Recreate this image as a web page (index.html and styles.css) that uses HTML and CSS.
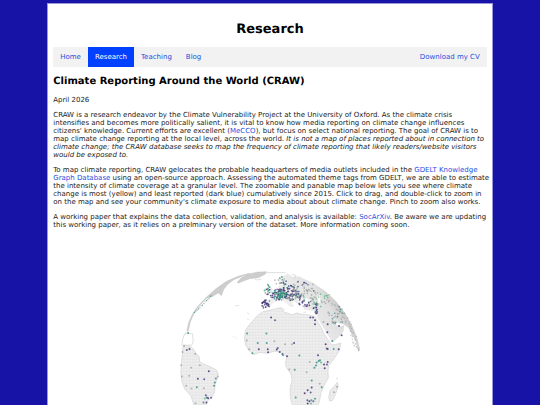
FILE: index.html
```html
<!DOCTYPE html>
<html lang="en">
<head>
    <meta charset="UTF-8">
    <meta name="viewport" content="width=device-width, initial-scale=1">
    <title>Research</title>
    <link rel="stylesheet" href="styles.css">
</head>
<body>
    <div class="page">
        <h1>Research</h1>

        <nav class="navbar">
            <a href="#home">Home</a>
            <a href="#research" class="active">Research</a>
            <a href="#teaching">Teaching</a>
            <a href="#blog">Blog</a>
            <a href="#cv" class="right">Download my CV</a>
        </nav>

        <h2>Climate Reporting Around the World (CRAW)</h2>
        <p>April 2026</p>

        <p>CRAW is a research endeavor by the Climate Vulnerability Project at the University of Oxford. As the climate crisis<br>
        intensifies and becomes more politically salient, it is vital to know how media reporting on climate change influences<br>
        citizens' knowledge. Current efforts are excellent (<a href="#mecco">MeCCO</a>), but focus on select national reporting. The goal of CRAW is to<br>
        map climate change reporting at the local level, across the world. <i>It is not a map of places reported about in connection to<br>
        climate change; the CRAW database seeks to map the frequency of climate reporting that likely readers/website visitors<br>
        would be exposed to.</i></p>

        <p>To map climate reporting, CRAW gelocates the probable headquarters of media outlets included in the <a href="#gdelt">GDELT Knowledge<br>
        Graph Database</a> using an open-source approach. Assessing the automated theme tags from GDELT, we are able to estimate<br>
        the intensity of climate coverage at a granular level. The zoomable and panable map below lets you see where climate<br>
        change is most (yellow) and least reported (dark blue) cumulatively since 2015. Click to drag, and double-click to zoom in<br>
        on the map and see your community's climate exposure to media about about climate change. Pinch to zoom also works.</p>

        <p>A working paper that explains the data collection, validation, and analysis is available: <a href="#socarxiv">SocArXiv</a>. Be aware we are updating<br>
        this working paper, as it relies on a prelminary version of the dataset. More information coming soon.</p>

        <svg class="globe" viewBox="-353 0 1302 450" role="img" aria-label="Globe of climate reporting">
            <defs>
                <pattern id="grid" width="9" height="9" patternUnits="userSpaceOnUse">
                    <rect width="9" height="9" fill="#f1f1f1"/>
                    <path d="M0 4H9M4 0V9" stroke="#e0e0e0" stroke-width="2"/>
                </pattern>
                <linearGradient id="limb" gradientUnits="userSpaceOnUse" x1="390" y1="200" x2="540" y2="110">
                    <stop offset="0" stop-color="#f0f0f0"/>
                    <stop offset="0.6" stop-color="#e0e0e0"/>
                    <stop offset="1" stop-color="#b4b4b4"/>
                </linearGradient>
            </defs>

            <!-- Americas -->
            <path class="edge" d="M49 206L55 180L66 156L82 133L108 105L138 79L168 58L205 42L238 34L218 42L190 53L172 67L160 82L153 101L143 93L126 104L108 110L88 130L70 156L60 178L53 208Z"/>
            <path class="coast" d="M51 208L42 216L36 234L34 252M42 216L66 215L68 236L64 250L50 250"/>
            <path class="land" d="M38 249L50 250L66 258L76 273L86 284L87 299L100 307L120 315L136 323L143 333L141 348L134 368L132 390L124 407L110 418L104 440L96 480L84 480L69 425L60 400L43 382L34 360L31 330L34 290Z"/>
            <!-- Greenland, Iceland, Atlantic islands -->
            <path class="edge" d="M200 61L211 49L232 37L262 30L289 29L284 37L264 47L238 50L219 57L203 64Z"/>
            <path class="coast" d="M253 52L262 54L272 51M188 222L192 225M196 230L198 227M230 153L236 156M230 170L235 174M195 132L205 130"/>
            <!-- Africa -->
            <path class="land" d="M262 160L278 149L300 144L333 137L340 150L353 154L365 159L378 153L395 157L417 159L434 164L443 182L452 196L462 218L474 234L484 249L496 248L512 243L507 266L492 289L475 310L473 330L474 348L462 370L452 392L447 420L433 450L405 480L382 480L371 445L360 410L359 380L365 355L362 337L348 317L345 302L350 285L333 270L312 268L290 274L266 272L250 278L235 265L225 248L222 228L225 205L233 193Z"/>
            <path class="land" d="M501 361L504 373L495 398L486 416L478 418L475 405L480 385L492 373Z"/>
            <!-- Europe and Asia -->
            <path class="plain" d="M284 113L302 111L309 102L300 96L316 91L326 82L322 72L338 67L326 64L323 50L340 42L352 35L366 44L386 43L400 50L430 64L465 88L498 119L526 156L546 193L560 226L570 264L565 268L555 237L544 216L535 198L519 187L505 184L491 176L499 190L510 194L521 190L520 207L510 221L496 234L486 242L473 221L457 194L440 166L440 149L416 145L402 143L399 130L415 123L425 119L409 108L392 119L388 130L373 119L359 113L372 132L361 136L342 119L326 114L307 124L298 136L284 134Z"/>
            <path class="white" d="M379 107L399 111L419 121L405 127L387 119ZM439 103L447 101L452 119L446 125Z"/>
            <path class="coast" d="M294 78L290 88L298 92L305 84L300 76ZM280 86L286 82L284 92ZM290 32L318 32L345 32M364 37L377 41L372 49"/>
            <path class="coast" d="M497 351L503 349M337 140L343 143M399 151L407 151M520 333L522 331"/>
            <g id="outlets"></g>
        </svg>
    </div>
    <script src="map.js"></script>
</body>
</html>
```
FILE: styles.css
```css
body {
    margin: 0;
    background-color: #1713a6;
    font-family: Verdana, "DejaVu Sans", sans-serif;
    font-size: 7px;
    line-height: 8px;
    text-rendering: geometricPrecision;
    color: #222;
}
.page {
    box-sizing: border-box;
    width: 82.5%;
    margin: 3px auto 0;
    padding: 8px 5px 0;
    border: 1px solid #9a98d8;
    background-color: #fff;
}
h1 {
    margin: 10px 0 9px;
    font-size: 13px;
    line-height: 16px;
    text-align: center;
    color: #000;
}
h2 {
    margin: 9px 0 8px;
    font-size: 10px;
    line-height: 12px;
    color: #000;
}
p {
    margin: 0 0 7px;
    white-space: nowrap;
}
a {
    color: #1f4fe0;
    text-decoration: none;
}
.navbar {
    display: flex;
    background-color: #f2f2f2;
}
.navbar a {
    padding: 6px 7px;
}
.navbar a.active {
    background-color: #0040ff;
    color: #fff;
}
.navbar .right {
    margin-left: auto;
}
.globe {
    display: block;
    width: 100%;
    margin-top: 33px;
}
.land {
    fill: url(#grid);
    stroke: #d2d2d2;
    stroke-width: 2;
}
.plain {
    fill: url(#limb);
}
.edge {
    fill: #cdcdcd;
    stroke: #b8b8b8;
}
.coast {
    fill: none;
    stroke: #d0d0d0;
    stroke-width: 2;
}
.white {
    fill: #fff;
}
```
FILE: map.js
```javascript
const colors = ['#46236f', '#3a4a80', '#2a8a85', '#4db87c', '#a5a5a5'];
const group = document.getElementById('outlets');

// x, y, color index
const outlets = [
    [57, 261, 0], [49, 264, 1], [74, 276, 4], [62, 318, 4], [115, 328, 0], [56, 342, 4],
    [82, 351, 0], [101, 352, 1], [136, 350, 2], [133, 362, 2], [131, 372, 2], [79, 376, 2],
    [100, 379, 4], [63, 380, 4], [142, 344, 4], [88, 310, 4], [106, 400, 1], [109, 407, 1],
    [103, 410, 3], [113, 409, 0], [122, 408, 1], [99, 422, 2], [108, 422, 0], [75, 424, 4],
    [53, 213, 2], [41, 252, 4], [36, 270, 4], [32, 310, 4], [34, 344, 4], [47, 372, 4],
    [230, 215, 2], [262, 243, 2], [289, 243, 2], [265, 262, 0], [292, 262, 0], [229, 236, 4],
    [236, 262, 4], [246, 274, 2], [302, 167, 0], [314, 175, 1], [288, 215, 2], [312, 238, 4],
    [344, 247, 4], [365, 247, 4], [371, 243, 0], [293, 271, 0], [319, 263, 0], [322, 258, 1],
    [328, 270, 0], [336, 276, 1], [338, 280, 2], [350, 283, 0], [387, 281, 2], [357, 323, 4],
    [373, 324, 2], [409, 331, 4], [418, 300, 4], [420, 167, 0], [428, 167, 1], [434, 175, 0],
    [434, 187, 0], [443, 280, 0], [466, 247, 0], [469, 260, 1], [472, 261, 0], [490, 261, 2],
    [505, 262, 0], [472, 300, 0], [470, 308, 1], [461, 308, 0], [445, 297, 2], [449, 295, 2],
    [439, 302, 2], [437, 311, 2], [432, 318, 2], [452, 302, 3], [463, 319, 0], [424, 356, 2],
    [448, 366, 4], [454, 376, 2], [424, 377, 0], [412, 385, 0], [403, 394, 0], [421, 392, 1],
    [376, 407, 2], [411, 415, 1], [417, 418, 0], [423, 415, 2], [429, 418, 1], [434, 411, 2],
    [412, 425, 0], [422, 425, 3], [471, 211, 0], [506, 192, 0], [514, 220, 0], [486, 237, 2],
    [500, 375, 4], [491, 391, 4], [472, 187, 0], [486, 179, 4], [474, 152, 4], [459, 180, 4]
];

// cx, cy, spread x, spread y, count, color indexes to draw from
const clusters = [
    [292, 83, 10, 16, 16, [0, 3, 3, 2]],
    [286, 126, 14, 14, 30, [0, 0, 1, 2]],
    [326, 98, 27, 17, 80, [0, 0, 1, 2, 3]],
    [360, 92, 28, 22, 70, [0, 1, 0, 2, 4]],
    [379, 108, 24, 14, 32, [0, 1, 3, 4]],
    [332, 98, 14, 14, 34, [3, 3, 2]],
    [330, 60, 20, 16, 20, [1, 2, 4]],
    [410, 124, 24, 12, 22, [0, 1, 4]],
    [436, 138, 7, 20, 20, [0, 0, 1, 2]],
    [400, 78, 36, 22, 42, [4, 4, 4, 1]],
    [450, 108, 32, 26, 34, [4, 4, 4, 3]],
    [500, 160, 25, 28, 26, [4, 4, 2]]
];

// small seeded generator so the map is the same on each load
let seed = 17;
function random() {
    seed = (seed * 16807) % 2147483647;
    return seed / 2147483647;
}

function addDot(x, y, color, r) {
    const dot = document.createElementNS('http://www.w3.org/2000/svg', 'circle');
    dot.setAttribute('cx', x);
    dot.setAttribute('cy', y);
    dot.setAttribute('r', r);
    dot.setAttribute('fill', colors[color]);
    dot.setAttribute('fill-opacity', 0.8);
    group.appendChild(dot);
}

clusters.forEach(([cx, cy, sx, sy, count, palette]) => {
    for (let i = 0; i < count; i++) {
        const angle = random() * Math.PI * 2;
        const d = Math.sqrt(random());
        const color = palette[Math.floor(random() * palette.length)];
        addDot(cx + Math.cos(angle) * d * sx, cy + Math.sin(angle) * d * sy, color, 2.5);
    }
});

// outlets seen edge-on along the rim
for (let i = 0; i < 40; i++) {
    const a = -0.78 + i * 0.016;
    const d = 272 - random() * 14;
    addDot(299 + Math.cos(a) * d, 308 + Math.sin(a) * d, 4, 2);
}
for (let i = 0; i < 14; i++) {
    addDot(72 + i * 4, 150 - i * 4 + random() * 4, i % 3 ? 4 : 2, 2);
}

outlets.forEach(([x, y, color]) => addDot(x, y, color, 3));
```
